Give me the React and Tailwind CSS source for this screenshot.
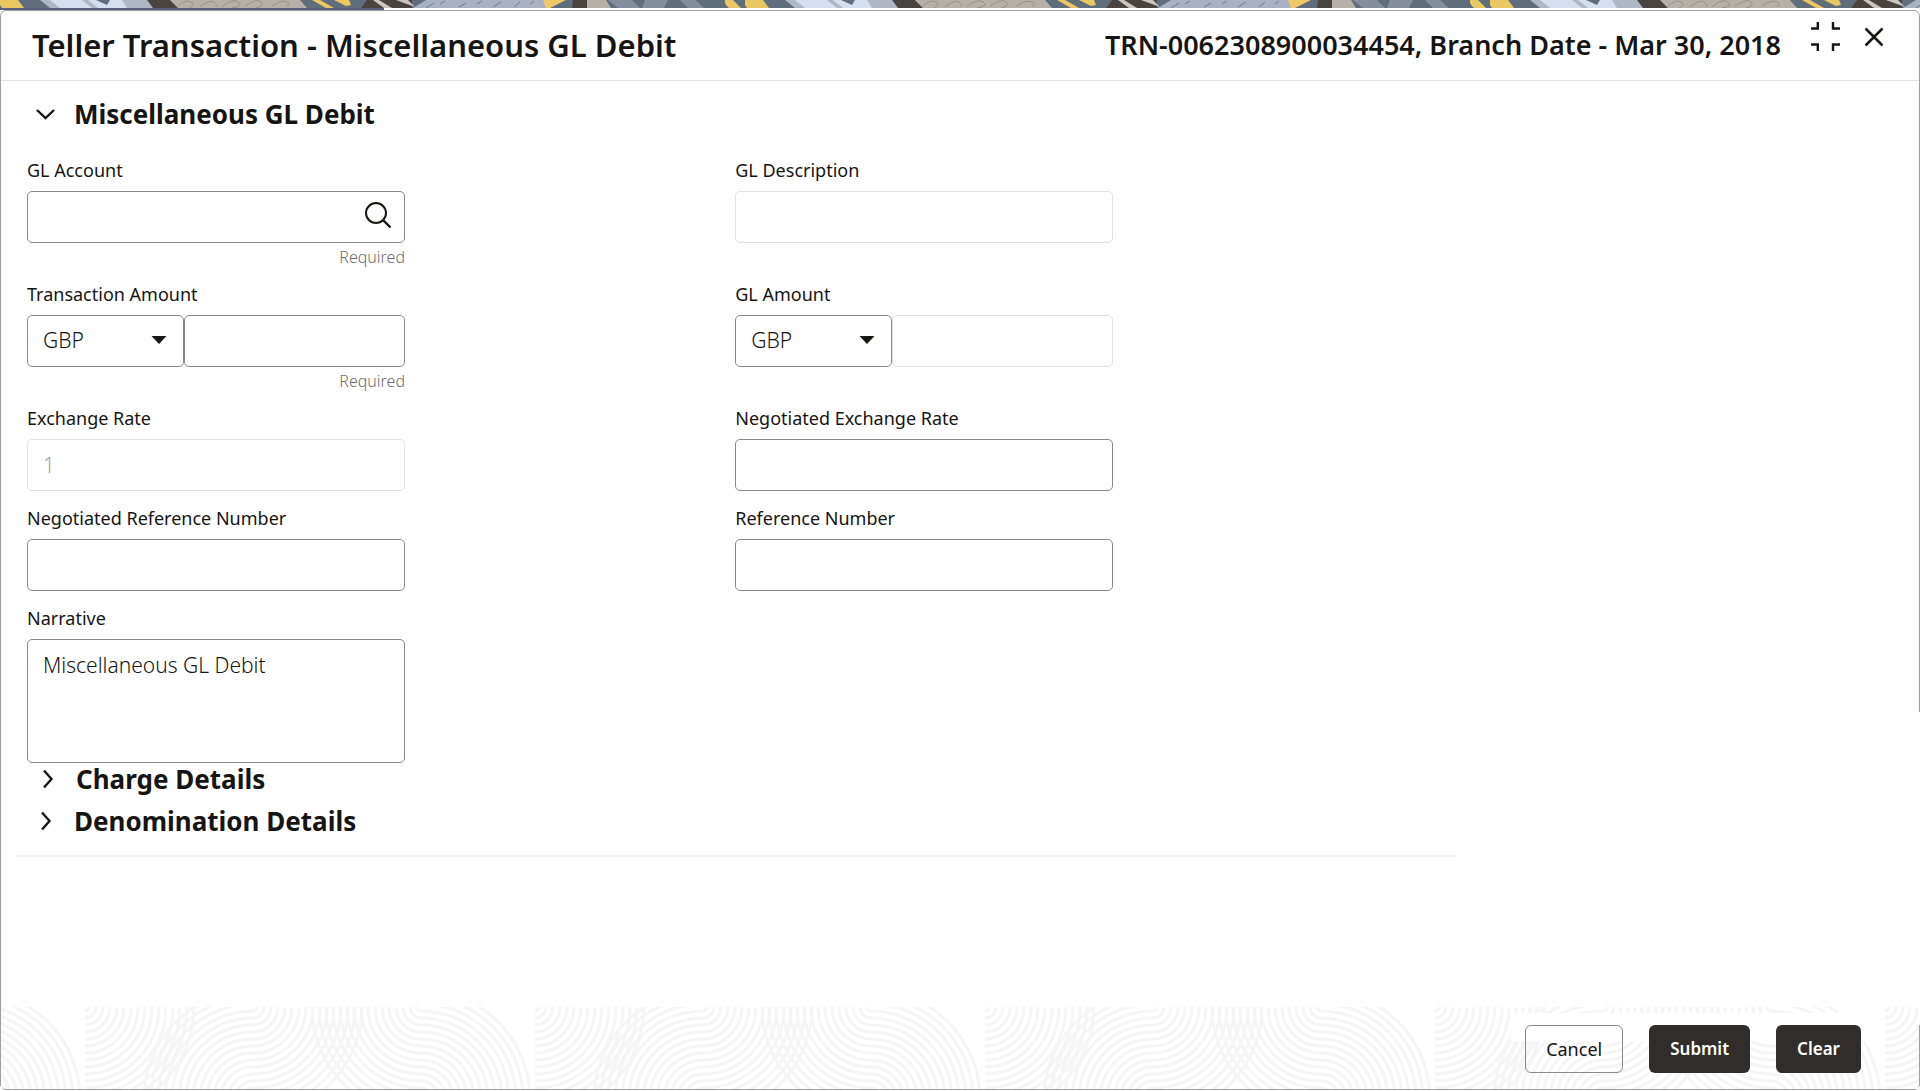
import { useState } from "react"

const ringRadii = [4, 11, 18, 25, 32, 39, 46, 53, 60, 67, 74, 81, 88, 95, 102, 109]

const initialForm = {
  glAccount: "",
  glDescription: "",
  transactionCurrency: "GBP",
  transactionAmount: "",
  glCurrency: "GBP",
  glAmount: "",
  exchangeRate: "1",
  negotiatedRate: "",
  negotiatedReference: "",
  referenceNumber: "",
  narrative: "Miscellaneous GL Debit",
}

const Rings = ({ cx, cy, clip }) => (
  <g clipPath={`url(#${clip})`}>
    {ringRadii.map((r) => (
      <circle key={r} cx={cx} cy={cy} r={r} />
    ))}
  </g>
)

const Banner = () => (
  <svg className="block h-2 w-full" aria-hidden="true">
    <defs>
      <pattern id="banner" width="745" height="8" patternUnits="userSpaceOnUse">
        <rect width="745" height="8" fill="#606e7b" />
        <path d="M0 0H18L24 8H2L0 5Z" fill="#e9c762" />
        <path d="M40 0H152L158 8H50Z" fill="#aeb7c3" />
        <path d="M50 0H82L92 8H60ZM98 0H122L127 8H98L88 0Z" fill="#d5dff0" />
        <path d="M96 0H110L107 5Z" fill="#606e7b" />
        <path d="M147 0H170L178 8H153Z" fill="#4a4441" />
        <path d="M170 0H300L307 8H178Z" fill="#b7b0a9" />
        <path d="M178 6q8 -7 13 -4t-2 6M200 7q10 -8 14 -5t2 5M222 7q10 -9 16 -5t-6 6M245 6q12 -8 16 -4t-5 6M272 6q10 -7 15 -4t0 4" fill="none" stroke="#97908a" />
        <path d="M312 0H320L334 8H326ZM334 0H349L351 5L346 6Z" fill="#e9c762" />
        <path d="M367 0H412V8H361Z" fill="#4a4441" />
        <path d="M373 0H379L392 8H384ZM396 0H408L415 7Z" fill="#cbc5bf" />
        <path d="M426 0H545L550 8H413Z" fill="#a8b2c2" />
        <path d="M434 3l-8 5M445 1l-5 3M466 3l-7 4M482 1l-5 3M501 2l-8 5M520 2l-6 5M534 1l-4 3" stroke="#6f7a8c" />
        <path d="M543 0H566L550 8H546Z" fill="#efc967" />
        <path d="M573 0H587V8H572Z" fill="#4a4441" />
        <path d="M587 0H606L611 8H587Z" fill="#b7b0a9" />
        <path d="M608 0H632L640 8H618ZM645 0H668L664 8H642ZM680 0H695L704 8H688Z" fill="#848e9c" />
        <path d="M725 0H736L741 8H729Q724 4 725 0Z" fill="#e9c762" />
        <path d="M733 0H745V8H741Z" fill="#606e7b" />
      </pattern>
    </defs>
    <rect width="100%" height="8" fill="url(#banner)" />
  </svg>
)

const FooterPattern = () => (
  <svg className="absolute inset-0 h-full w-full" aria-hidden="true">
    <defs>
      <clipPath id="left"><rect x="0" y="0" width="168" height="82" /></clipPath>
      <clipPath id="middle"><rect x="168" y="0" width="168" height="82" /></clipPath>
      <clipPath id="right"><rect x="336" y="0" width="114" height="82" /></clipPath>
      <pattern id="rings" x="84" width="450" height="82" patternUnits="userSpaceOnUse">
        <g fill="none" stroke="#f5f5f5" strokeWidth="3">
          <Rings cx="0" cy="0" clip="left" />
          <Rings cx="168" cy="92" clip="left" />
          <Rings cx="168" cy="0" clip="middle" />
          <Rings cx="336" cy="0" clip="middle" />
          <Rings cx="336" cy="92" clip="right" />
        </g>
      </pattern>
    </defs>
    <rect width="100%" height="100%" fill="url(#rings)" />
  </svg>
)

const Field = ({ id, label, required, children }) => (
  <div className="w-full max-w-[378px]">
    <label htmlFor={id} className="mb-[9px] block text-lg leading-6">
      {label}
    </label>
    {children}
    {required && (
      <p className="pt-1 text-right text-base leading-5 font-light text-[#6f6d6b]">Required</p>
    )}
  </div>
)

const TextInput = ({ className = "", ...props }) => (
  <input
    type="text"
    className={`h-[52px] w-full min-w-0 rounded-[5px] border border-[#8b8988] bg-white px-[15px] text-[21px] font-light disabled:border-[#e1e1e1] disabled:text-[#a5a4a3] ${className}`}
    {...props}
  />
)

const CurrencySelect = (props) => (
  <div className="relative w-[157px] shrink-0">
    <select
      className="h-[52px] w-full appearance-none rounded-[5px] border border-[#8b8988] bg-white px-[15px] text-[21px] font-light"
      {...props}
    >
      <option>GBP</option>
      <option>USD</option>
      <option>EUR</option>
    </select>
    <svg className="pointer-events-none absolute top-[21px] right-[17px] h-2 w-4" viewBox="0 0 16 8" aria-hidden="true">
      <path d="M0.5 0H15.5L8 8Z" fill="#161513" />
    </svg>
  </div>
)

const SectionToggle = ({ title, open, onClick }) => (
  <h2>
    <button
      type="button"
      onClick={onClick}
      aria-expanded={open}
      className="flex items-center gap-[15px] text-[26px] leading-10 font-bold"
    >
      <svg className="h-6 w-7" viewBox="0 0 28 24" fill="none" stroke="#161513" strokeWidth="2.4" aria-hidden="true">
        {open ? <path d="M6 8L14.500 16L23 8" /> : <path d="M11 3.500L18.500 12L11 20.500" />}
      </svg>
      {title}
    </button>
  </h2>
)

const App = () => {
  const [formData, setFormData] = useState(initialForm)
  const [open, setOpen] = useState({ main: true, charge: false, denomination: false })

  const handleChange = (e) => {
    const { name, value } = e.target
    setFormData((prev) => ({ ...prev, [name]: value }))
  }

  const toggle = (key) => setOpen((prev) => ({ ...prev, [key]: !prev[key] }))

  // Shared props for each bound control
  const bind = (name) => ({ id: name, name, value: formData[name], onChange: handleChange })

  return (
    <div className="flex min-h-screen flex-col bg-white font-['Noto_Sans','Open_Sans',sans-serif] text-[#161513]">
      <Banner />
      <div className="h-[2px] w-1/5 bg-[#5a5f84]"></div>

      <div className="relative mb-px flex flex-1 flex-col rounded-md border border-[#a09e9d]">
        <div className="absolute top-[65%] -right-px bottom-16 w-px bg-white"></div>

        <header className="flex h-[70px] items-start justify-between border-b border-[#e4e4e4] pr-[35px] pl-[31px]">
          <h1 className="pt-[14px] text-[31px] leading-10 font-semibold whitespace-nowrap">
            Teller Transaction - Miscellaneous GL Debit
          </h1>
          <div className="flex items-start">
            <p className="mr-[30px] pt-[14px] text-[27px] leading-10 font-semibold whitespace-nowrap">
              TRN-0062308900034454, Branch Date - Mar 30, 2018
            </p>
            <button type="button" aria-label="Collapse" className="mt-[11px] mr-6">
              <svg className="h-[29px] w-[29px]" viewBox="0 0 29 29" fill="none" stroke="#161513" strokeWidth="2.4">
                <path d="M0 6.500H6.800V0M22 0V6.500H29M0 22.500H6.800V29M22 29V22.500H29" />
              </svg>
            </button>
            <button type="button" aria-label="Close" className="mt-4">
              <svg className="h-5 w-5" viewBox="0 0 20 20" fill="none" stroke="#161513" strokeWidth="2.5">
                <path d="M1.500 1.500L18.500 18.500M18.500 1.500L1.500 18.500" />
              </svg>
            </button>
          </div>
        </header>

        <main className="ml-4 w-3/4 flex-1">
          <div className="border-b-2 border-[#f2f2f2] pb-[14px] pl-[10px]">
            <div className="pt-[13px] pl-1">
              <SectionToggle title="Miscellaneous GL Debit" open={open.main} onClick={() => toggle("main")} />
            </div>

            {open.main && (
              <div className="mr-3 grid grid-cols-2 gap-y-[15px] pt-6">
                <Field id="glAccount" label="GL Account" required>
                  <div className="relative">
                    <TextInput {...bind("glAccount")} className="pr-14" />
                    <button type="button" aria-label="Search account" className="absolute top-2 right-3">
                      <svg className="h-8 w-8" viewBox="0 0 32 32" fill="none" stroke="#161513" strokeWidth="2">
                        <circle cx="15" cy="14" r="10" />
                        <path d="M22 21L29.500 28.500" strokeWidth="2.4" />
                      </svg>
                    </button>
                  </div>
                </Field>
                <Field id="glDescription" label="GL Description">
                  <TextInput {...bind("glDescription")} disabled />
                </Field>

                <Field id="transactionAmount" label="Transaction Amount" required>
                  <div className="flex">
                    <CurrencySelect {...bind("transactionCurrency")} aria-label="Transaction currency" />
                    <TextInput {...bind("transactionAmount")} />
                  </div>
                </Field>
                <Field id="glAmount" label="GL Amount">
                  <div className="flex">
                    <CurrencySelect {...bind("glCurrency")} aria-label="GL currency" />
                    <TextInput {...bind("glAmount")} disabled />
                  </div>
                </Field>

                <Field id="exchangeRate" label="Exchange Rate">
                  <TextInput {...bind("exchangeRate")} disabled />
                </Field>
                <Field id="negotiatedRate" label="Negotiated Exchange Rate">
                  <TextInput {...bind("negotiatedRate")} />
                </Field>

                <Field id="negotiatedReference" label="Negotiated Reference Number">
                  <TextInput {...bind("negotiatedReference")} />
                </Field>
                <Field id="referenceNumber" label="Reference Number">
                  <TextInput {...bind("referenceNumber")} />
                </Field>

                <Field id="narrative" label="Narrative">
                  <textarea
                    {...bind("narrative")}
                    className="block h-[124px] w-full resize-none rounded-[5px] border border-[#8b8988] px-[15px] py-[11px] text-[21px] leading-7 font-light"
                  />
                </Field>
              </div>
            )}

            <div className="-mt-1 pl-[6px]">
              <SectionToggle title="Charge Details" open={open.charge} onClick={() => toggle("charge")} />
            </div>
            <div className="pt-[2px] pl-1">
              <SectionToggle title="Denomination Details" open={open.denomination} onClick={() => toggle("denomination")} />
            </div>
          </div>
        </main>

        <footer className="relative flex h-[82px] items-start justify-end overflow-hidden pr-[44px]">
          <FooterPattern />
          <div className="relative flex gap-[26px] px-[14px] pt-[18px]">
            <div className="absolute top-[6px] right-0 left-0 h-7 bg-white"></div>
            <button type="button" className="relative h-12 rounded-md border border-[#8b8988] px-5 text-lg">
              Cancel
            </button>
            <button type="submit" className="relative h-12 rounded-md bg-[#312d2a] px-[21px] text-[17px] font-semibold text-white">
              Submit
            </button>
            <button
              type="button"
              onClick={() => setFormData(initialForm)}
              className="relative h-12 rounded-md bg-[#312d2a] px-[21px] text-[17px] font-semibold text-white"
            >
              Clear
            </button>
          </div>
        </footer>
      </div>
    </div>
  )
}

export default App
